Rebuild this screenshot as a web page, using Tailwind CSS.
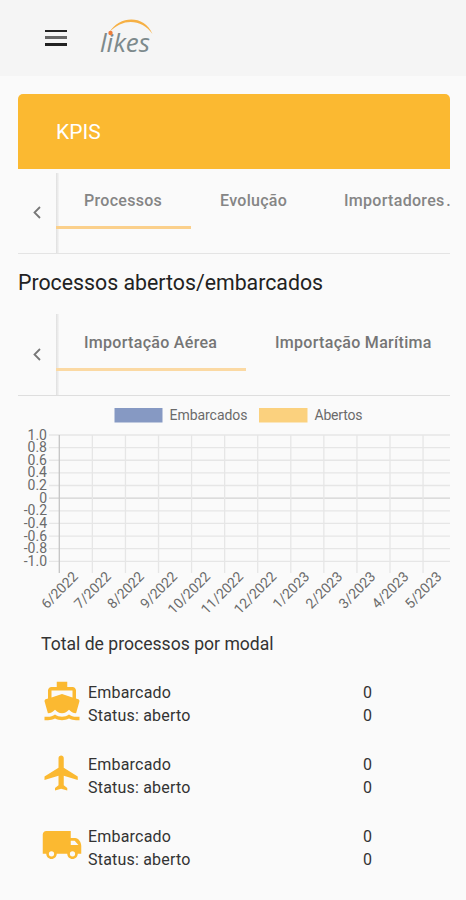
<!DOCTYPE html>
<html lang="pt-BR">
<head>
    <meta charset="UTF-8">
    <meta name="viewport" content="width=device-width, initial-scale=1.0">
    <title>Likes - KPIS</title>
    <script src="https://cdn.jsdelivr.net/npm/@tailwindcss/browser@4"></script>
</head>
<body class="bg-[#fafafa] h-[900px] overflow-hidden font-['Roboto',sans-serif] text-[#333]">

    <!-- Header -->
    <header class="h-[76px] bg-[#f5f5f5] flex items-center pl-[45px]">
        <button class="w-[22px] h-4 flex flex-col justify-between -mt-px" aria-label="Menu">
            <span class="block w-full h-[2.5px] bg-[#222]"></span>
            <span class="block w-full h-[2.5px] bg-[#666]"></span>
            <span class="block w-full h-[2.5px] bg-[#222]"></span>
        </button>
        <svg class="ml-8 w-16 h-10 overflow-visible" viewBox="0 0 64 40">
            <text x="1" y="34" textLength="50" lengthAdjust="spacingAndGlyphs" class="font-['Open_Sans',sans-serif] italic font-medium text-[25px] fill-[#7d8a8c]">likes</text>
            <path d="M10.500 14C20-2 45-4 53.500 16C43 1 24-.500 10.500 14z" fill="#f6b044"/>
            <circle cx="11.500" cy="15" r="2.200" fill="#ef7d3a"/>
        </svg>
    </header>

    <main class="pt-[18px] pl-[18px] pr-4">
        <div class="h-[75px] bg-[#fbb931] rounded-t-[5px] flex items-center pl-[38px] pt-[3px]">
            <h1 class="text-[21px] text-white">KPIS</h1>
        </div>

        <!-- Main tabs -->
        <nav class="mt-1 h-[81px] flex border-b border-[#e4e4e4] overflow-hidden">
            <button class="w-[38px] shrink-0 flex items-center justify-center pb-[2px]" aria-label="Anterior">
                <svg class="w-2 h-[13px]" viewBox="0 0 8 13" fill="none" stroke="#777" stroke-width="1.8"><path d="M7 1L1.500 6.500L7 12"/></svg>
            </button>
            <div class="w-[3px] shrink-0 -mr-[3px] bg-linear-to-r from-[#dfdfdf] to-[#f5f5f5]"></div>
            <div class="flex h-[56px] text-base font-medium tracking-[0.3px] text-[#858585] whitespace-nowrap">
                <span class="w-[135px] border-b-[3px] border-[#fbd08b] pl-[28px] pt-[16px]">Processos</span>
                <span class="w-[124px] pl-[29px] pt-[16px]">Evolução</span>
                <span class="pl-[29px] pt-[16px] [word-spacing:-2.5px]">Importadores .</span>
            </div>
        </nav>

        <h2 class="mt-[14px] h-[30px] leading-[30px] text-[21.3px] text-[#222] whitespace-nowrap">Processos abertos/embarcados</h2>

        <!-- Modal tabs -->
        <nav class="mt-[16px] h-[82px] flex border-b border-[#dedede] overflow-hidden">
            <button class="w-[38px] shrink-0 flex items-center justify-center" aria-label="Anterior">
                <svg class="w-2 h-[13px]" viewBox="0 0 8 13" fill="none" stroke="#777" stroke-width="1.8"><path d="M7 1L1.500 6.500L7 12"/></svg>
            </button>
            <div class="w-[3px] shrink-0 -mr-[3px] bg-linear-to-r from-[#dfdfdf] to-[#f5f5f5]"></div>
            <div class="flex h-[57px] text-base font-medium tracking-[0.3px] text-[#757575] whitespace-nowrap">
                <span class="w-[190px] border-b-[3px] border-[#fbd9a3] pl-[28px] pt-[17px]">Importação Aérea</span>
                <span class="pl-[29px] pt-[17px]">Importação Marítima</span>
            </div>
        </nav>

        <!-- Chart -->
        <svg id="chart" class="block w-[432px] h-[224px] text-[14px]" viewBox="18 396 432 224" fill="#6b6b6b">
            <rect x="114.500" y="408" width="48" height="14.500" fill="#8699c3"/>
            <text x="169.500" y="419.500" textLength="78">Embarcados</text>
            <rect x="259" y="408" width="48.500" height="14.500" fill="#fbd17e"/>
            <text x="314.500" y="419.500" textLength="48">Abertos</text>
        </svg>

        <!-- Totals -->
        <section class="pl-[23px]">
            <h3 class="mt-3 leading-6 text-[17.6px] text-[#333] whitespace-nowrap">Total de processos por modal</h3>
            <div class="mt-[24px] text-[16px] leading-[23px] tracking-[0.2px] text-[#333]">
                <div class="h-[72px] flex">
                    <svg class="w-[42px] h-[42px] shrink-0" viewBox="0 0 24 24" fill="#fbb931"><path d="M20 21c-1.39 0-2.78-.47-4-1.32-2.44 1.71-5.56 1.71-8 0C6.78 20.53 5.39 21 4 21H2v2h2c1.38 0 2.74-.35 4-.99 2.52 1.29 5.48 1.29 8 0 1.26.65 2.62.99 4 .99h2v-2h-2zM3.95 19H4c1.6 0 3.02-.88 4-2 .98 1.12 2.4 2 4 2s3.02-.88 4-2c.98 1.12 2.4 2 4 2h.05l1.89-6.68c.08-.26.06-.54-.06-.78s-.34-.42-.6-.5L20 10.62V6c0-1.1-.9-2-2-2h-3V1H9v3H6c-1.1 0-2 .9-2 2v4.62l-1.29.42c-.26.08-.48.26-.6.5s-.15.52-.06.78L3.95 19zM6 6h12v3.97L12 8 6 9.97V6z"/></svg>
                    <div class="w-[276px] pl-[5px] pt-px"><p>Embarcado</p><p>Status: aberto</p></div>
                    <div class="pl-[4px] pt-px"><p>0</p><p>0</p></div>
                </div>
                <div class="h-[72px] flex">
                    <svg class="w-[42px] h-[42px] shrink-0" viewBox="0 0 24 24" fill="#fbb931"><path d="M21 16v-2l-8-5V3.500c0-.83-.67-1.500-1.500-1.500S10 2.670 10 3.500V9l-8 5v2l8-2.500V19l-2 1.500V22l3.500-1 3.500 1v-1.500L13 19v-5.500l8 2.500z"/></svg>
                    <div class="w-[276px] pl-[5px] pt-px"><p>Embarcado</p><p>Status: aberto</p></div>
                    <div class="pl-[4px] pt-px"><p>0</p><p>0</p></div>
                </div>
                <div class="h-[72px] flex">
                    <svg class="w-[42px] h-[42px] shrink-0" viewBox="0 0 24 24" fill="#fbb931"><path fill-rule="evenodd" d="M19.500 8H17V4H3c-1.100 0-2 .900-2 2v11h2c0 1.660 1.340 3 3 3s3-1.340 3-3h6c0 1.660 1.340 3 3 3s3-1.340 3-3h2v-4.500C23 10.500 21.500 8 19.500 8zM6 18.500a1.500 1.500 0 1 1 0-3a1.500 1.500 0 0 1 0 3zM19.200 9.500L21.400 12H17V9.500zM18 18.500a1.500 1.500 0 1 1 0-3a1.500 1.500 0 0 1 0 3z"/></svg>
                    <div class="w-[276px] pl-[5px] pt-px"><p>Embarcado</p><p>Status: aberto</p></div>
                    <div class="pl-[4px] pt-px"><p>0</p><p>0</p></div>
                </div>
            </div>
        </section>
    </main>

    <script>
        const chart = document.getElementById('chart');
        const months = ['6/2022', '7/2022', '8/2022', '9/2022', '10/2022', '11/2022', '12/2022', '1/2023', '2/2023', '3/2023', '4/2023', '5/2023'];
        const values = ['1.0', '0.8', '0.6', '0.4', '0.2', '0', '-0.2', '-0.4', '-0.6', '-0.8', '-1.0'];

        function add(name, attrs, text) {
            const el = document.createElementNS('http://www.w3.org/2000/svg', name);
            for (const key in attrs) el.setAttribute(key, attrs[key]);
            if (text) el.textContent = text;
            chart.appendChild(el);
        }

        // Horizontal grid lines and value labels
        values.forEach((value, i) => {
            const y = 435 + i * 12.63;
            add('line', { x1: 49, x2: 450, y1: y, y2: y, stroke: value === '0' ? '#d2d2d2' : '#e6e6e6', 'stroke-width': 1.3 });
            add('text', { x: 47, y: y + 4.5, 'text-anchor': 'end' }, value);
        });

        // Vertical grid lines and month labels
        months.forEach((month, i) => {
            const x = 59.3 + i * 33.07;
            add('line', { x1: x, x2: x, y1: 435, y2: 573, stroke: i === 0 ? '#c4c4c4' : '#e6e6e6', 'stroke-width': 1.3 });
            add('text', { x: 0, y: 0, 'text-anchor': 'end', transform: `translate(${x + 19.5} 577.5) rotate(-45)` }, month);
        });
    </script>
</body>
</html>
